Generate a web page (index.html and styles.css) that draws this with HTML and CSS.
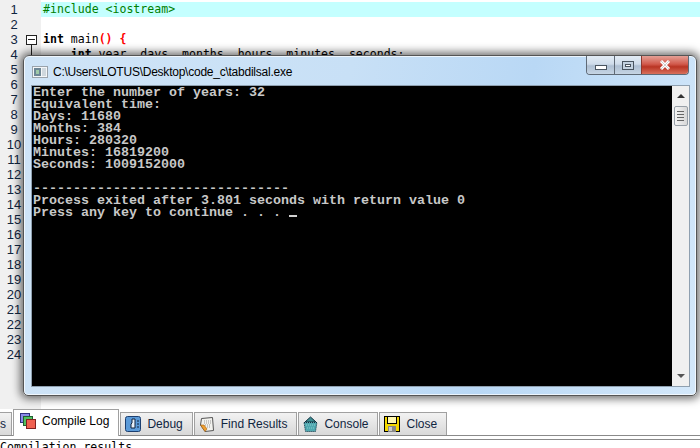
FILE: index.html
```html
<!DOCTYPE html>
<html lang="en">
<head>
    <meta charset="UTF-8">
    <title>tabdilsal</title>
    <link rel="stylesheet" href="styles.css">
</head>
<body>
    <div class="editor">
        <div class="gutter">
            <div>1</div><div>2</div><div>3</div><div>4</div><div>5</div><div>6</div>
            <div>7</div><div>8</div><div>9</div><div>10</div><div>11</div><div>12</div>
            <div>13</div><div>14</div><div>15</div><div>16</div><div>17</div><div>18</div>
            <div>19</div><div>20</div><div>21</div><div>22</div><div>23</div><div>24</div>
        </div>
        <div class="fold">
            <div class="fold-box"></div>
            <div class="fold-line"></div>
        </div>
        <div class="code">
            <div class="row current"><span class="pre">#include &lt;iostream&gt;</span></div>
            <div class="row"></div>
            <div class="row"><b>int</b> main<b class="sym">()</b> <b class="sym">{</b></div>
            <div class="row">    <b>int</b> year, days, months, hours, minutes, seconds;</div>
        </div>

        <!-- console window floats above the editor -->
        <div class="window">
            <div class="titlebar">
                <svg class="win-icon" width="16" height="16" viewBox="0 0 16 16">
                    <rect x="0.5" y="2.5" width="15" height="11" fill="#f4f6f8" stroke="#9aa3ab"/>
                    <rect x="2" y="4" width="7" height="8" fill="#6d8796"/>
                    <rect x="10" y="4" width="4" height="8" fill="#cfd8de"/>
                    <rect x="4" y="6" width="3" height="4" fill="#9fc9a8"/>
                </svg>
                <span class="win-title">C:\Users\LOTUS\Desktop\code_c\tabdilsal.exe</span>
                <div class="win-buttons">
                    <div class="btn btn-min"><i></i></div>
                    <div class="btn btn-max"><i></i></div>
                    <div class="btn btn-close">
                        <svg width="12" height="10" viewBox="0 0 12 10"><path d="M2 1 L10 9 M10 1 L2 9" stroke="#fff" stroke-width="3"/><path d="M2 1 L10 9 M10 1 L2 9" stroke="#5a5a5a" stroke-width="0.6" opacity="0.5"/></svg>
                    </div>
                </div>
            </div>
            <div class="client">
                <pre class="terminal">Enter the number of years: 32
Equivalent time:
Days: 11680
Months: 384
Hours: 280320
Minutes: 16819200
Seconds: 1009152000

--------------------------------
Process exited after 3.801 seconds with return value 0
Press any key to continue . . . <span class="cursor"></span></pre>
                <div class="scrollbar">
                    <div class="arrow-up"></div>
                    <div class="thumb"><i></i><i></i><i></i><i></i></div>
                    <div class="arrow-down"></div>
                </div>
            </div>
        </div>
    </div>

    <div class="tabs">
        <div class="tab cut">s</div>
        <div class="tab active">
            <svg width="16" height="16" viewBox="0 0 16 16">
                <rect x="0.5" y="0.5" width="9" height="9" fill="#8a8ae8" stroke="#303080"/>
                <rect x="3.5" y="3.5" width="9" height="9" fill="#50c060" stroke="#206030"/>
                <rect x="6.5" y="6.5" width="9" height="9" fill="#f06050" stroke="#802020"/>
            </svg>
            Compile Log
        </div>
        <div class="tab">
            <svg width="16" height="16" viewBox="0 0 16 16">
                <rect x="0.5" y="0.5" width="15" height="15" rx="2" fill="#5b9ad8" stroke="#1c3f70"/>
                <path d="M7 3 H10 V12 H6 V8 L7 7 Z" fill="#e8f0f8" stroke="#10203a"/>
                <path d="M12 5 H14 M12 8 H14 M12 11 H14" stroke="#10203a"/>
            </svg>
            Debug
        </div>
        <div class="tab">
            <svg width="16" height="17" viewBox="0 0 16 17">
                <path d="M2.5 2.5 L13.5 1.5 L14.5 14.5 L6 15.5 L1.5 9 Z" fill="#f2f2ee" stroke="#555"/>
                <path d="M5 5 H12 M5 7 H12 M6 9 H12 M8 11 H12" stroke="#999" stroke-dasharray="1 1"/>
                <path d="M1.5 9 L6 15.5 L8 13 L5 9 Z" fill="#f0a030" stroke="#a06010" stroke-width="0.6"/>
            </svg>
            Find Results
        </div>
        <div class="tab">
            <svg width="15" height="17" viewBox="0 0 15 17">
                <path d="M2 6 L7.5 1 L13 6 Z" fill="#3c8c90" stroke="#0c3040"/>
                <path d="M1 6.5 H14 L12.5 15.5 H2.5 Z" fill="#50a8b0" stroke="#0c3040" stroke-dasharray="1 1"/>
                <path d="M3 9 H12 M4 12 H11" stroke="#8ad0d0" stroke-dasharray="1 1"/>
            </svg>
            Console
        </div>
        <div class="tab">
            <svg width="16" height="16" viewBox="0 0 16 16">
                <rect x="0.5" y="0.5" width="15" height="15" fill="#f5d800" stroke="#000"/>
                <rect x="3.5" y="0.5" width="9" height="7" fill="#fff8b0" stroke="#000"/>
                <rect x="4" y="10" width="8" height="6" fill="#888"/>
                <rect x="5" y="11" width="3" height="4" fill="#ccc"/>
            </svg>
            Close
        </div>
    </div>

    <div class="log">Compilation results...</div>
</body>
</html>
```

FILE: styles.css
```css
* {
    box-sizing: border-box;
}

html, body {
    margin: 0;
    height: 448px;
    overflow: hidden;
    background: #fff;
}

body {
    display: flex;
    flex-direction: column;
    font-family: "Liberation Sans", sans-serif;
}

/* editor */
.editor {
    position: relative;
    display: flex;
    height: 409px;
    flex: none;
    padding-top: 2px;
    background: linear-gradient(#fff 394px, #fff);
}

.gutter {
    width: 25px;
    margin-top: -2px;
    padding-top: 2px;
    background: #f0f0f0;
    font: 13px "Liberation Sans", sans-serif;
    color: #10253f;
    flex: none;
}

.gutter div {
    height: 15px;
    line-height: 15px;
    text-align: center;
    padding-left: 3px;
}

.fold {
    width: 16px;
    margin-top: -2px;
    background: #f0f0f0;
    flex: none;
    padding: 35px 0 0 1px;
}

.fold-box {
    width: 11px;
    height: 10px;
    border: 1px solid #222;
    background: #fff;
    position: relative;
}

.fold-box::after {
    content: "";
    position: absolute;
    left: 1px;
    right: 1px;
    top: 3px;
    height: 1px;
    background: #222;
}

.fold-line {
    width: 1px;
    height: 12px;
    margin-left: 5px;
    background: #222;
}

.code {
    flex: 1;
    font: 11.55px "DejaVu Sans Mono", monospace;
    color: #000;
}

.row {
    height: 15px;
    line-height: 15px;
    padding-left: 2px;
    white-space: pre;
}

.current {
    background: #c4ffff;
}

.pre {
    color: #008000;
}

.sym {
    color: #ff0000;
}

/* console window */
.window {
    position: absolute;
    left: 23px;
    top: 55px;
    width: 674px;
    height: 341px;
    padding: 0 7px 9px 8px;
    display: flex;
    flex-direction: column;
    border: 1px solid #555;
    border-radius: 6px 6px 5px 5px;
    background: linear-gradient(100deg, #cfe4f7 0%, #c8e0f6 45%, #b9d8f5 70%, #d4e8fa 100%);
    box-shadow: 0 0 9px 3px rgba(0, 0, 0, 0.55), inset 0 0 0 1px rgba(255, 255, 255, 0.7);
}

.titlebar {
    position: relative;
    height: 30px;
    flex: none;
    display: flex;
    align-items: center;
    gap: 5px;
    padding: 1px 0 0 0;
}

.win-icon {
    flex: none;
}

.win-title {
    font-size: 12px;
    color: #000;
    letter-spacing: -0.02em;
    white-space: nowrap;
}

.win-buttons {
    position: absolute;
    right: 0;
    top: 0;
    display: flex;
    height: 19px;
    border: 1px solid #5f6a76;
    border-top: 0;
    border-radius: 0 0 4px 4px;
    overflow: hidden;
}

.btn {
    display: flex;
    align-items: center;
    justify-content: center;
    height: 100%;
    background: linear-gradient(#e3ecf5, #cfdcea 45%, #aebfd2 55%, #c6d5e4);
}

.btn-min {
    width: 28px;
    border-right: 1px solid #5f6a76;
}

.btn-min i {
    display: block;
    width: 12px;
    height: 5px;
    margin-top: 5px;
    background: #fff;
    border: 1px solid #4a5560;
}

.btn-max {
    width: 27px;
    border-right: 1px solid #8c3a30;
}

.btn-max i {
    display: block;
    width: 12px;
    height: 9px;
    background: #fff;
    border: 1px solid #4a5560;
    box-shadow: inset 0 0 0 2px #c4d2e0, inset 0 0 0 3px #4a5560;
}

.btn-close {
    width: 46px;
    background: linear-gradient(#e4a096, #d25a4c 45%, #b93423 60%, #d8705c);
}

.client {
    flex: 1;
    display: flex;
    min-height: 0;
    outline: 1px solid #8fa0b0;
}

.terminal {
    flex: 1;
    margin: 0;
    padding: 1px 0 0 1px;
    background: #000;
    color: #c8c8c8;
    font: bold 13.33px/12px "Liberation Mono", monospace;
    overflow: hidden;
}

.cursor {
    display: inline-block;
    width: 8px;
    height: 2px;
    background: #d0d0d0;
    vertical-align: -1px;
}

.scrollbar {
    width: 17px;
    flex: none;
    display: flex;
    flex-direction: column;
    align-items: center;
    background: #f0f0f0;
    padding-top: 8px;
}

.arrow-up {
    border: 4px solid transparent;
    border-top: 0;
    border-bottom: 4px solid #333;
}

.thumb {
    width: 14px;
    height: 20px;
    margin-top: 8px;
    display: flex;
    flex-direction: column;
    align-items: center;
    justify-content: center;
    gap: 1px;
    border: 1px solid #98a0a8;
    border-radius: 2px;
    background: linear-gradient(90deg, #f4f4f4, #d8d8d8);
}

.thumb i {
    display: block;
    width: 7px;
    height: 1px;
    margin-bottom: 1px;
    background: #666;
}

.arrow-down {
    margin-top: auto;
    margin-bottom: 8px;
    border: 4px solid transparent;
    border-bottom: 0;
    border-top: 4px solid #555;
}

/* bottom tabs */
.tabs {
    display: flex;
    align-items: flex-end;
    height: 27px;
    flex: none;
    gap: 1px;
    border-bottom: 1px solid #8a8a8a;
}

.tab {
    height: 23px;
    display: flex;
    align-items: center;
    gap: 6px;
    padding: 0 9px 0 4px;
    font-size: 12px;
    color: #10253f;
    background: linear-gradient(#f2f2f2, #d8d8d8);
    border: 1px solid #a0a0a0;
    border-bottom: 0;
    white-space: nowrap;
}

.tab.cut {
    width: 12px;
    padding: 0;
    border-left: 0;
    justify-content: flex-end;
    padding-right: 5px;
}

.tab.active {
    height: 27px;
    margin-bottom: -1px;
    background: #fff;
    color: #000;
    padding-bottom: 4px;
    padding-left: 6px;
    position: relative;
}

.log {
    margin-top: 3px;
    padding-left: 0;
    border-top: 1px solid #8a8a8a;
    font: 11.55px/15px "DejaVu Sans Mono", monospace;
    color: #000;
}
```
